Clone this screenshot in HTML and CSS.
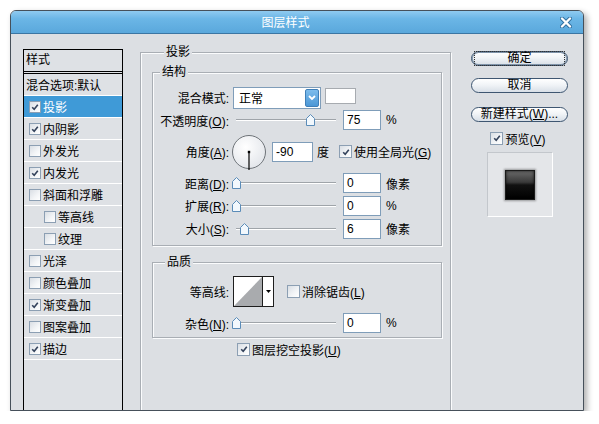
FILE: index.html
```html
<!DOCTYPE html>
<html lang="zh-CN">
<head>
<meta charset="utf-8">
<title>图层样式</title>
<link rel="stylesheet" href="styles.css">
</head>
<body>
<div class="dialog">
  <div class="titlebar">
    <span class="title">图层样式</span>
    <span class="close"><svg width="12" height="11" viewBox="0 0 12 11"><path d="M2 1.5 L10 9.5 M10 1.5 L2 9.5" stroke="#2f6c9c" stroke-width="4" stroke-linecap="round"/><path d="M2 1.5 L10 9.5 M10 1.5 L2 9.5" stroke="#fff" stroke-width="2.4" stroke-linecap="round"/></svg></span>
  </div>
  <div class="content">
    <div class="stylelist">
      <div class="list-head">样式</div>
      <div class="row plain">混合选项:默认</div>
      <div class="row sel"><span class="cb on"><svg viewBox="0 0 10 10"><path d="M2.2 5.2 L4.2 7.3 L7.8 2.8"/></svg></span>投影</div>
      <div class="row"><span class="cb on"><svg viewBox="0 0 10 10"><path d="M2.2 5.2 L4.2 7.3 L7.8 2.8"/></svg></span>内阴影</div>
      <div class="row"><span class="cb"></span>外发光</div>
      <div class="row"><span class="cb on"><svg viewBox="0 0 10 10"><path d="M2.2 5.2 L4.2 7.3 L7.8 2.8"/></svg></span>内发光</div>
      <div class="row"><span class="cb"></span>斜面和浮雕</div>
      <div class="row sub"><span class="cb"></span>等高线</div>
      <div class="row sub"><span class="cb"></span>纹理</div>
      <div class="row"><span class="cb"></span>光泽</div>
      <div class="row"><span class="cb"></span>颜色叠加</div>
      <div class="row"><span class="cb on"><svg viewBox="0 0 10 10"><path d="M2.2 5.2 L4.2 7.3 L7.8 2.8"/></svg></span>渐变叠加</div>
      <div class="row"><span class="cb"></span>图案叠加</div>
      <div class="row"><span class="cb on"><svg viewBox="0 0 10 10"><path d="M2.2 5.2 L4.2 7.3 L7.8 2.8"/></svg></span>描边</div>
    </div>

    <div class="grp outer">
      <div class="legend lg-outer">投影</div>
      <div class="grp struct">
        <div class="legend lg-struct">结构</div>
        <div class="rows">
          <div class="frow h23">
            <span class="lbl">混合模式:</span>
            <span class="select"><span class="sel-text">正常</span><span class="sel-btn"><svg width="8" height="6" viewBox="0 0 8 6"><path d="M1 1 L4 4 L7 1" fill="none" stroke="#fff" stroke-width="1.8"/></svg></span></span>
            <span class="swatch"></span>
          </div>
          <div class="frow h22">
            <span class="lbl">不透明度(<u>O</u>):</span>
            <span class="slider"><span class="track"></span><span class="thumb" style="left:74px"><svg width="9" height="12" viewBox="0 0 9 12"><path d="M0.5 4.5 L4.5 0.5 L8.5 4.5 V11.5 H0.5 Z"/></svg></span></span>
            <span class="num">75</span><span class="unit">%</span>
          </div>
          <div class="frow h41">
            <span class="lbl">角度(<u>A</u>):</span>
            <span class="dial"><svg width="36" height="40" viewBox="0 0 36 40"><defs><radialGradient id="dg" cx="0.4" cy="0.35" r="0.7"><stop offset="0" stop-color="#ffffff"/><stop offset="1" stop-color="#e2e5ea"/></radialGradient></defs><circle cx="18" cy="18" r="16.5" fill="url(#dg)" stroke="#6e7378" stroke-width="1"/><path d="M18 18 V36" stroke="#000" stroke-width="1.2"/><rect x="16.8" y="16.8" width="2.4" height="2.4" fill="#000"/></svg></span>
            <span class="num wide">-90</span><span class="unit deg">度</span>
            <span class="cb big on ml10"><svg viewBox="0 0 10 10"><path d="M2.2 5.2 L4.2 7.3 L7.8 2.8"/></svg></span><span class="cbl">使用全局光(<u>G</u>)</span>
          </div>
          <div class="frow h22">
            <span class="lbl">距离(<u>D</u>):</span>
            <span class="slider"><span class="track"></span><span class="thumb" style="left:0px"><svg width="9" height="12" viewBox="0 0 9 12"><path d="M0.5 4.5 L4.5 0.5 L8.5 4.5 V11.5 H0.5 Z"/></svg></span></span>
            <span class="num">0</span><span class="unit">像素</span>
          </div>
          <div class="frow h23">
            <span class="lbl">扩展(<u>R</u>):</span>
            <span class="slider"><span class="track"></span><span class="thumb" style="left:0px"><svg width="9" height="12" viewBox="0 0 9 12"><path d="M0.5 4.5 L4.5 0.5 L8.5 4.5 V11.5 H0.5 Z"/></svg></span></span>
            <span class="num">0</span><span class="unit">%</span>
          </div>
          <div class="frow h23">
            <span class="lbl">大小(<u>S</u>):</span>
            <span class="slider"><span class="track"></span><span class="thumb" style="left:8px"><svg width="9" height="12" viewBox="0 0 9 12"><path d="M0.5 4.5 L4.5 0.5 L8.5 4.5 V11.5 H0.5 Z"/></svg></span></span>
            <span class="num">6</span><span class="unit">像素</span>
          </div>
        </div>
      </div>

      <div class="grp quality">
        <div class="legend lg-quality">品质</div>
        <div class="rows qrows">
          <div class="frow h31">
            <span class="lbl">等高线:</span>
            <span class="contour"><span class="curve"><svg width="28" height="29" viewBox="0 0 28 29"><polygon points="0,29 28,0 28,29" fill="#a9abae"/></svg></span><span class="cbtn"><svg width="5" height="3" viewBox="0 0 5 3"><path d="M0 0 H5 L2.5 3 Z" fill="#000"/></svg></span></span>
            <span class="cb big ml13"></span><span class="cbl">消除锯齿(<u>L</u>)</span>
          </div>
          <div class="frow h22 mt5">
            <span class="lbl">杂色(<u>N</u>):</span>
            <span class="slider"><span class="track"></span><span class="thumb" style="left:0px"><svg width="9" height="12" viewBox="0 0 9 12"><path d="M0.5 4.5 L4.5 0.5 L8.5 4.5 V11.5 H0.5 Z"/></svg></span></span>
            <span class="num">0</span><span class="unit">%</span>
          </div>
        </div>
      </div>

      <div class="knock">
        <span class="cb big on"><svg viewBox="0 0 10 10"><path d="M2.2 5.2 L4.2 7.3 L7.8 2.8"/></svg></span><span class="cbl">图层挖空投影(<u>U</u>)</span>
      </div>
    </div>

    <div class="side">
      <div class="btn default"><span>确定</span></div>
      <div class="btn b-cancel"><span>取消</span></div>
      <div class="btn b-new"><span>新建样式(<u>W</u>)...</span></div>
      <div class="preview-row"><span class="cb big on"><svg viewBox="0 0 10 10"><path d="M2.2 5.2 L4.2 7.3 L7.8 2.8"/></svg></span><span class="cbl">预览(<u>V</u>)</span></div>
      <div class="preview"><span class="swatch-dark"></span></div>
    </div>
  </div>
</div>
</body>
</html>
```
FILE: styles.css
```css
* { box-sizing: border-box; }
html, body { margin: 0; padding: 0; background: #ffffff; }
body {
  font-family: "Liberation Sans", "Noto Sans CJK SC", sans-serif;
  font-size: 12px;
  color: #000;
}
u { text-decoration: underline; text-underline-offset: 1px; }

.dialog {
  margin: 10px 0 0 10px;
  width: 574px;
  height: 401px;
  border: 1px solid #46505a;
  border-radius: 6px 6px 0 0;
  background: #dcdfe3;
  box-shadow: 3px 3px 6px rgba(0, 0, 0, 0.32);
  overflow: hidden;
  display: flex;
  flex-direction: column;
}

.titlebar {
  flex: none;
  height: 23px;
  display: flex;
  align-items: center;
  background: linear-gradient(#8fcaf0 0%, #6bb6e6 35%, #5aa8dc 100%);
  border-bottom: 1px solid #3b76a3;
  color: #fff;
}
.title {
  flex: 1;
  text-align: center;
  line-height: 16px;
  padding-top: 1px;
}
.close {
  width: 23px;
  flex: none;
  display: flex;
  justify-content: flex-start;
  align-items: center;
}

.content {
  flex: 1;
  display: flex;
  align-items: flex-start;
  padding-left: 12px;
  min-height: 0;
}

/* style list */
.stylelist {
  flex: none;
  width: 100px;
  height: 400px;
  margin-top: 15px;
  border: 1px solid #000;
  border-bottom: none;
  background: #dee1e5;
}
.list-head {
  height: 24px;
  border-bottom: 3px double #000;
  padding-left: 2px;
  line-height: 21px;
}
.row {
  height: 22px;
  border-bottom: 1px solid #fff;
  display: flex;
  align-items: center;
  padding-left: 5px;
  white-space: nowrap;
}
.row.plain { padding-left: 2px; }
.row.sub { padding-left: 20px; }
.row.sel { background: #3f9ad7; color: #fff; }
.row .cb { margin-right: 2px; }

/* checkbox */
.cb {
  flex: none;
  display: inline-flex;
  align-items: center;
  justify-content: center;
  width: 12px;
  height: 12px;
  border: 1px solid #8c9fb3;
  background: linear-gradient(135deg, #d9dee4 0%, #f3f5f7 60%, #ffffff 100%);
}
.cb.big { width: 13px; height: 13px; }
.cb svg { width: 10px; height: 10px; }
.cb svg path { fill: none; stroke: #34435c; stroke-width: 1.6; }
.cbl { margin-left: 2px; white-space: nowrap; }
.ml10 { margin-left: 10px; }
.ml13 { margin-left: 13px; }

/* group boxes */
.grp {
  border: 1px solid #a9aeb4;
  box-shadow: inset 1px 1px 0 #fbfcfd, 1px 1px 0 #fbfcfd;
}
.legend {
  display: block;
  width: max-content;
  margin-top: -8px;
  line-height: 14px;
  padding: 0 2px;
  background: #dcdfe3;
}
.outer {
  flex: none;
  width: 311px;
  height: 400px;
  margin: 18px 0 0 17px;
  padding: 0 8px 0 11px;
}
.lg-outer { margin-left: 12px; }
.struct { margin-top: 13px; padding-bottom: 5px; }
.lg-struct { margin-left: 7px; }
.quality { margin-top: 16px; padding-bottom: 3px; }
.lg-quality { margin-left: 12px; }
.rows { margin-top: 7px; }

.frow {
  display: flex;
  align-items: center;
  white-space: nowrap;
}
.h22 { height: 22px; }
.h23 { height: 23px; }
.h31 { height: 31px; }
.h41 { height: 41px; }
.mt5 { margin-top: 5px; }

.lbl {
  flex: none;
  width: 76px;
  text-align: right;
}

/* dropdown */
.select {
  flex: none;
  margin-left: 4px;
  width: 88px;
  height: 22px;
  border: 1px solid #7f9db9;
  background: #fff;
  display: flex;
  align-items: center;
  padding: 1px;
}
.sel-text { flex: 1; padding-left: 4px; }
.sel-btn {
  flex: none;
  width: 14px;
  height: 18px;
  border-radius: 2px;
  background: linear-gradient(#7dbcec, #4b97d6);
  border: 1px solid #3f7fb8;
  display: flex;
  align-items: center;
  justify-content: center;
}
.swatch {
  flex: none;
  align-self: flex-start;
  margin: 2px 0 0 4px;
  width: 31px;
  height: 16px;
  background: #fff;
  border: 1px solid #a7abb0;
}

/* slider */
.slider {
  flex: none;
  position: relative;
  margin-left: 3px;
  width: 104px;
  height: 12px;
}
.track {
  display: block;
  margin: 5px 0 0 4px;
  height: 2px;
  border-top: 1px solid #9fa4a9;
  border-bottom: 1px solid #ffffff;
}
.thumb {
  position: absolute;
  top: 0;
  width: 9px;
  height: 12px;
}
.thumb svg { display: block; }
.thumb path { fill: #f2f8fd; stroke: #5b8cb8; stroke-width: 1; }

/* number fields */
.num {
  flex: none;
  margin-left: 7px;
  width: 38px;
  height: 20px;
  border: 1px solid #7f9db9;
  background: #fff;
  padding-left: 3px;
  line-height: 18px;
}
.num.wide { width: 41px; margin-left: 6px; }
.unit { margin-left: 5px; }
.unit.deg { margin-left: 4px; }

/* dial */
.dial {
  flex: none;
  margin-left: 3px;
  width: 34px;
  height: 34px;
}
.dial svg { display: block; margin: -1px 0 0 -1px; overflow: visible; }

/* contour */
.contour {
  flex: none;
  margin-left: 4px;
  width: 41px;
  height: 31px;
  border: 1px solid #1e1e1e;
  background: #fff;
  display: flex;
}
.curve { flex: none; width: 28px; height: 29px; }
.curve svg { display: block; }
.cbtn {
  flex: 1;
  border-left: 1px solid #1e1e1e;
  display: flex;
  align-items: center;
  justify-content: center;
}
.cbtn svg { display: block; }

.knock {
  height: 22px;
  display: flex;
  align-items: center;
  margin-left: 85px;
}

/* right side */
.side {
  flex: none;
  width: 97px;
  margin: 17px 0 0 20px;
  display: flex;
  flex-direction: column;
  align-items: center;
}
.btn {
  width: 97px;
  height: 15px;
  border: 1px solid #3e5671;
  border-radius: 8px;
  background: linear-gradient(#ffffff 0%, #f1f4f7 45%, #d8dfe7 100%);
  display: flex;
  align-items: center;
  justify-content: center;
  line-height: 13px;
  white-space: nowrap;
}
.btn.default {
  box-shadow: inset 0 0 0 1px #7f93a8;
}
.btn.default span {
  outline: 1px dotted #333;
  outline-offset: 0;
  width: 89px;
  text-align: center;
}
.b-cancel { margin-top: 12px; }
.b-new { margin-top: 14px; }
.preview-row {
  margin-top: 9px;
  height: 14px;
  display: flex;
  align-items: center;
  padding-right: 3px;
}
.preview {
  margin-top: 7px;
  width: 66px;
  height: 65px;
  background: #e4e6e9;
  border: 1px solid;
  border-color: #c3c7cc #ffffff #ffffff #c3c7cc;
  display: flex;
  align-items: center;
  justify-content: center;
}
.swatch-dark {
  width: 30px;
  height: 30px;
  border: 1px solid #1a1a1a;
  background: linear-gradient(#6a6a6a 0%, #3a3a3a 40%, #111 50%, #000 100%);
  box-shadow: 0 0 2px 1px rgba(0, 0, 0, 0.35), inset 0 0 3px rgba(0, 0, 0, 0.8);
}
```
